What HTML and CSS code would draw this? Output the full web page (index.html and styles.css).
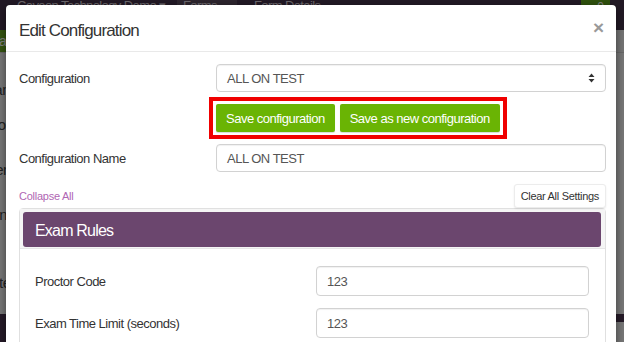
FILE: index.html
```html
<!DOCTYPE html>
<html lang="en">
<head>
    <meta charset="UTF-8">
    <meta name="viewport" content="width=device-width, initial-scale=1.0">
    <title>Edit Configuration</title>
    <link rel="stylesheet" href="styles.css">
</head>
<body>
    <!-- page behind the dialog -->
    <div class="page">
        <nav class="topbar">
            <span class="brand">Caveon Technology Demo &#9662;</span>
            <span class="tab active">Forms</span>
            <span class="tab">Form Details</span>
            <span class="badge">&#9679; 0</span>
        </nav>
        <div class="toolbar">
            <span class="btn-create">Create</span>
        </div>
        <div class="page-content">
            <p class="frag f1">Name</p>
            <p class="frag f2">Form</p>
            <p class="frag f3">Items</p>
            <p class="frag f4">Settings</p>
            <p class="frag f5">Content</p>
        </div>
        <div class="page-footer"></div>
        <div class="page-bottom"></div>
    </div>

    <div class="backdrop"></div>

    <div class="modal">
        <div class="modal-header">
            <h4 class="modal-title">Edit Configuration</h4>
            <span class="close">&times;</span>
        </div>
        <div class="modal-body">
            <div class="form-row">
                <label>Configuration</label>
                <div class="select-box">
                    <span>ALL ON TEST</span>
                    <svg width="7" height="10" viewBox="0 0 7 10"><path d="M3.5 0.5 L6.5 4 H0.5 Z M3.5 9.5 L6.5 6 H0.5 Z" fill="#333"/></svg>
                </div>
            </div>
            <div class="form-row">
                <span></span>
                <div class="highlight">
                    <button class="btn-green">Save configuration</button>
                    <button class="btn-green">Save as new configuration</button>
                </div>
            </div>
            <div class="form-row name-row">
                <label>Configuration Name</label>
                <div class="input-box">ALL ON TEST</div>
            </div>
            <div class="actions">
                <a class="collapse-link">Collapse All</a>
                <button class="btn-clear">Clear All Settings</button>
            </div>
            <div class="panel">
                <div class="panel-heading">
                    <div class="panel-title">Exam Rules</div>
                </div>
                <div class="panel-body">
                    <div class="rule-row">
                        <label>Proctor Code</label>
                        <div class="input-box">123</div>
                    </div>
                    <div class="rule-row">
                        <label>Exam Time Limit (seconds)</label>
                        <div class="input-box">123</div>
                    </div>
                </div>
            </div>
        </div>
    </div>
</body>
</html>
```

FILE: styles.css
```css
body {
    font-family: "Liberation Sans", Arial, sans-serif;
    margin: 0;
    padding: 0;
    width: 624px;
    height: 342px;
    overflow: hidden;
    position: relative;
    background: #eeeeee;
    color: #333;
    letter-spacing: -0.5px;
}
.page {
    height: 342px;
    display: flex;
    flex-direction: column;
}
.topbar {
    height: 30px;
    background: #45334a;
    display: flex;
    align-items: flex-start;
    font-size: 13px;
    letter-spacing: -0.6px;
    color: #d8d0d8;
    padding-left: 17px;
}
.topbar .brand {
    margin-top: -2px;
    width: 160px;
}
.topbar .tab {
    margin-top: -2px;
    padding: 0 6px;
    height: 12px;
}
.topbar .tab.active {
    background: #5a4a5d;
    width: 48px;
    margin-right: 11px;
}
.topbar .badge {
    margin-left: auto;
    margin-right: 14px;
    background: #5fa21a;
    color: #fff;
    font-size: 12px;
    letter-spacing: 0;
    padding: 0 6px;
    height: 12px;
    border-radius: 0 0 4px 4px;
}
.toolbar {
    height: 22px;
    background: #e8e8e8;
}
.btn-create {
    display: inline-block;
    margin-left: -28px;
    height: 22px;
    line-height: 22px;
    background: #6aaa22;
    color: #fff;
    font-size: 14px;
    padding: 0 6px;
}
.page-content {
    flex: 1;
    border-top: 1px solid #d0d0d0;
    position: relative;
}
.frag {
    margin: 0;
    font-size: 15px;
    color: #444;
    position: absolute;
    right: 602px;
}
.f1 { top: 28px; }
.f2 { top: 63px; }
.f3 { top: 108px; }
.f4 { top: 153px; }
.f5 { top: 221px; }
.page-footer {
    height: 8px;
    background: #4a3550;
}
.page-bottom {
    height: 20px;
    background: linear-gradient(to right, #4a3550 20px, #eeeeee 20px);
}

.backdrop {
    position: absolute;
    inset: 0;
    background: rgba(0, 0, 0, 0.5);
}

.modal {
    position: absolute;
    top: 5px;
    left: 6px;
    width: 610px;
    height: 360px;
    box-sizing: border-box;
    background: #fff;
    border-radius: 4px;
    box-shadow: 0 3px 9px rgba(0, 0, 0, 0.5);
}
.modal-header {
    height: 47px;
    box-sizing: border-box;
    border-bottom: 1px solid #e9e9e9;
    display: flex;
    align-items: center;
    justify-content: space-between;
    padding: 5px 12px 0 13px;
}
.modal-title {
    margin: 0;
    font-size: 17px;
    font-weight: normal;
    letter-spacing: -0.85px;
    color: #333;
}
.close {
    font-size: 19px;
    font-weight: bold;
    color: #999;
    line-height: 1;
    margin-top: -7px;
    letter-spacing: 0;
}
.modal-body {
    padding: 12px 10px 0 13px;
}
.form-row {
    display: grid;
    grid-template-columns: 197px 1fr;
    align-items: center;
    margin-bottom: 5px;
}
.form-row label,
.rule-row label {
    font-size: 13px;
    color: #333;
}
.select-box,
.input-box {
    height: 28px;
    box-sizing: border-box;
    border: 1px solid #d2d2d2;
    border-radius: 4px;
    box-shadow: inset 0 1px 1px rgba(0, 0, 0, 0.06);
    padding: 0 10px;
    font-size: 13px;
    color: #555;
    display: flex;
    align-items: center;
}
.select-box {
    justify-content: space-between;
}
.highlight {
    justify-self: start;
    margin-left: -7px;
    border: 4px solid #f00000;
    padding: 3px;
    display: flex;
    gap: 5px;
}
.btn-green {
    height: 28px;
    border: none;
    border-radius: 2px;
    background: #6ab404;
    color: #fff;
    font-family: inherit;
    font-size: 13px;
    letter-spacing: -0.5px;
    padding: 0 10px;
    box-shadow: 0 1px 1px rgba(0, 0, 0, 0.15);
}
.name-row {
    margin-top: 1px;
    margin-bottom: 12px;
}
.actions {
    display: flex;
    justify-content: space-between;
    align-items: center;
}
.collapse-link {
    font-size: 11px;
    letter-spacing: -0.25px;
    color: #b066b3;
}
.btn-clear {
    height: 24px;
    border: 1px solid #ececec;
    border-radius: 3px;
    background: #fff;
    box-shadow: 0 1px 2px rgba(0, 0, 0, 0.08);
    font-family: inherit;
    font-size: 11px;
    letter-spacing: -0.3px;
    color: #333;
    padding: 0 6px;
}
.panel {
    border: 1px solid #e0e0e0;
    border-radius: 4px;
}
.panel-heading {
    background: #f5f5f5;
    padding: 3px 4px 1px 3px;
    border-bottom: 1px solid #e6e6e6;
}
.panel-title {
    height: 35px;
    background: #6b466e;
    border-radius: 3px;
    color: #fff;
    font-size: 16px;
    letter-spacing: -0.8px;
    display: flex;
    align-items: center;
    padding: 2px 0 0 12px;
    box-sizing: border-box;
}
.panel-body {
    padding: 17px 16px 17px 15px;
}
.rule-row {
    display: grid;
    grid-template-columns: 281px 1fr;
    align-items: center;
    margin-bottom: 12px;
}
.rule-row .input-box {
    height: 30px;
}
```
